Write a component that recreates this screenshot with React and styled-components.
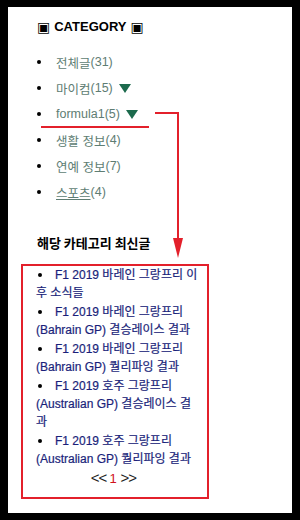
import React from "react";
import styled, { createGlobalStyle } from "styled-components";

const Global = createGlobalStyle`
  html, body {
    margin: 0;
    padding: 0;
    background: #000;
  }
  body {
    font-family: "Liberation Sans", "Noto Sans CJK KR", sans-serif;
  }
`;

const Page = styled.div`
  width: 300px;
  height: 520px;
  padding: 7px 8px;
  box-sizing: border-box;
  background: #000;
`;

const Panel = styled.div`
  position: relative;
  width: 284px;
  height: 506px;
  background: #fff;
  padding: 10px 0 0 29px;
  box-sizing: border-box;
`;

const Title = styled.h2`
  margin: 0;
  display: flex;
  align-items: center;
  gap: 4px;
  font-family: "Liberation Sans", "Noto Sans CJK KR", sans-serif;
  font-size: 13px;
  line-height: 20px;
  font-weight: bold;
  color: #000;
`;

const Mark = styled.span`
  font-family: "DejaVu Sans", sans-serif;
  font-weight: normal;
  font-size: 14px;
`;

const CategoryList = styled.ul`
  list-style: none;
  margin: 12px 0 0;
  padding: 0;
`;

const Category = styled.li`
  display: flex;
  align-items: center;
  height: 26px;
  font-size: 12.5px;
  color: #5e7d73;

  &::before {
    content: "";
    width: 4px;
    height: 4px;
    border-radius: 50%;
    background: #000;
    margin: 0 15px 0 0;
  }
`;

const CatName = styled.span`
  text-decoration: ${(p) => (p.$underline ? "underline" : "none")};
`;

const Caret = styled.svg`
  margin-left: 6px;
`;

const Heading = styled.h3`
  margin: 28px 0 0;
  font-family: "Noto Sans CJK KR", sans-serif;
  font-size: 13px;
  line-height: 20px;
  font-weight: bold;
  color: #000;
`;

const PostBox = styled.div`
  margin: 11px 0 0 -16px;
  width: 188px;
  box-sizing: border-box;
  border: 2px solid #e3202b;
  padding: 0 8px 9px 13px;
`;

const PostList = styled.ul`
  list-style: none;
  margin: 0;
  padding: 0;
`;

const Post = styled.li`
  font-size: 12px;
  line-height: 18px;
  color: #1a1f7a;
  margin-bottom: 1px;
  -webkit-text-stroke: 0.2px #1a1f7a;

  &::before {
    content: "";
    display: inline-block;
    width: 4px;
    height: 4px;
    border-radius: 50%;
    background: #000;
    vertical-align: middle;
    margin: 0 13px 2px 2px;
  }
`;

const Pager = styled.div`
  text-align: center;
  font-family: "Liberation Sans", sans-serif;
  font-size: 15px;
  line-height: 18px;
  color: #222;
  letter-spacing: -1px;
  margin-left: -8px;
`;

const PageNum = styled.span`
  color: #d0121b;
  font-size: 13px;
  letter-spacing: 0;
  margin: 0 4px 0 3px;
`;

const Overlay = styled.svg`
  position: absolute;
  left: 0;
  top: 0;
  pointer-events: none;
`;

const categories = [
  { name: "전체글", count: 31 },
  { name: "마이컴", count: 15, open: true },
  { name: "formula1", count: 5, open: true },
  { name: "생활 정보", count: 4 },
  { name: "연예 정보", count: 7 },
  { name: "스포츠", count: 4, underline: true },
];

const posts = [
  "F1 2019 바레인 그랑프리 이후 소식들",
  "F1 2019 바레인 그랑프리 (Bahrain GP) 결승레이스 결과",
  "F1 2019 바레인 그랑프리 (Bahrain GP) 퀄리파잉 결과",
  "F1 2019 호주 그랑프리 (Australian GP) 결승레이스 결과",
  "F1 2019 호주 그랑프리 (Australian GP) 퀄리파잉 결과",
];

export default function App() {
  return (
    <Page>
      <Global />
      <Panel>
        <Title>
          <Mark>▣</Mark>CATEGORY<Mark>▣</Mark>
        </Title>
        <CategoryList>
          {categories.map((c) => (
            <Category key={c.name}>
              <CatName $underline={c.underline}>{c.name}</CatName>({c.count})
              {c.open && (
                <Caret width="12" height="9" viewBox="0 0 12 9">
                  <path d="M0 0 H12 L6 9 Z" fill="#1c6a4d" />
                </Caret>
              )}
            </Category>
          ))}
        </CategoryList>
        <Heading>해당 카테고리 최신글</Heading>
        <PostBox>
          <PostList>
            {posts.map((p) => (
              <Post key={p}>{p}</Post>
            ))}
          </PostList>
          <Pager>
            &lt;&lt;<PageNum>1</PageNum>&gt;&gt;
          </Pager>
        </PostBox>
        <Overlay width="284" height="506">
          <g stroke="#e3202b" strokeWidth="2" fill="none">
            <line x1="33" y1="120" x2="141" y2="120" />
            <polyline points="147,106 170,106 170,232" />
          </g>
          <path d="M165 231 H175 L170 251 Z" fill="#e3202b" />
        </Overlay>
      </Panel>
    </Page>
  );
}
